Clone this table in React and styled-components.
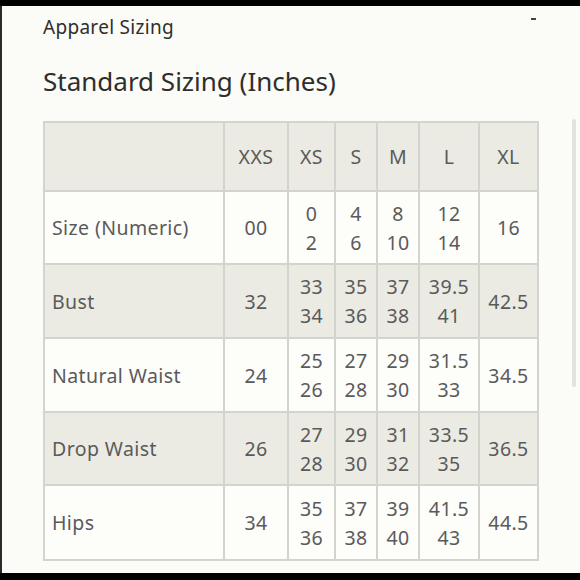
import styled, { createGlobalStyle } from "styled-components";

const GlobalStyle = createGlobalStyle`
  html, body {
    margin: 0;
    background: #000;
  }
  * {
    box-sizing: border-box;
  }
`;

const Screen = styled.div`
  width: 580px;
  height: 580px;
  padding: 6px 0 7px 0;
  background: #000;
`;

const Sheet = styled.div`
  position: relative;
  height: 100%;
  background: #fbfbf7;
  border-left: 2px solid #2a2a2a;
  padding: 9px 0 0 41px;
  font-family: "Noto Sans", "Liberation Sans", sans-serif;
  color: #2e2e2e;
`;

const Caption = styled.div`
  font-size: 19px;
  line-height: 24px;
  letter-spacing: 0.3px;
`;

const Title = styled.h1`
  margin: 25px 0 23px 0;
  font-size: 26px;
  line-height: 34px;
  font-weight: 400;
`;

const Dash = styled.span`
  position: absolute;
  top: 12px;
  right: 44px;
  width: 5px;
  height: 2px;
  background: #444;
`;

const ScrollThumb = styled.div`
  position: absolute;
  top: 113px;
  right: 4px;
  width: 4px;
  height: 268px;
  border-radius: 2px;
  background: #e3e3de;
`;

const Table = styled.table`
  width: 494px;
  table-layout: fixed;
  border-collapse: collapse;
  border: 2px solid #d4d4cf;
  color: #5a5a5a;
  font-size: 19.5px;
  letter-spacing: 0.4px;
`;

const Row = styled.tr`
  height: ${(p) => p.h}px;
  background: ${(p) => (p.shade ? "#ebebe3" : "#fdfdfa")};
`;

const Cell = styled.td`
  border: 2px solid #d4d4cf;
  text-align: center;
  vertical-align: middle;
  padding: 0;
  line-height: 29px;
`;

const Label = styled(Cell)`
  text-align: left;
  padding-left: 7px;
`;

const Stack = styled.div`
  display: flex;
  flex-direction: column;
  align-items: center;
`;

const widths = [180, 64, 47, 42, 42, 60, 59];
const sizes = ["XXS", "XS", "S", "M", "L", "XL"];

const rows = [
  { label: "Size (Numeric)", values: ["00", ["0", "2"], ["4", "6"], ["8", "10"], ["12", "14"], "16"] },
  { label: "Bust", values: ["32", ["33", "34"], ["35", "36"], ["37", "38"], ["39.5", "41"], "42.5"] },
  { label: "Natural Waist", values: ["24", ["25", "26"], ["27", "28"], ["29", "30"], ["31.5", "33"], "34.5"] },
  { label: "Drop Waist", values: ["26", ["27", "28"], ["29", "30"], ["31", "32"], ["33.5", "35"], "36.5"] },
  { label: "Hips", values: ["34", ["35", "36"], ["37", "38"], ["39", "40"], ["41.5", "43"], "44.5"] },
];

const heights = [73, 74, 74, 73, 75];

export default function App() {
  return (
    <Screen>
      <GlobalStyle />
      <Sheet>
        <Dash />
        <ScrollThumb />
        <Caption>Apparel Sizing</Caption>
        <Title>Standard Sizing (Inches)</Title>
        <Table>
          <colgroup>
            {widths.map((w, i) => (
              <col key={i} style={{ width: w }} />
            ))}
          </colgroup>
          <tbody>
            <Row h={69} shade>
              <Cell />
              {sizes.map((s) => (
                <Cell key={s}>{s}</Cell>
              ))}
            </Row>
            {rows.map((r, i) => (
              <Row key={r.label} h={heights[i]} shade={i % 2 === 1}>
                <Label>{r.label}</Label>
                {r.values.map((v, j) => (
                  <Cell key={j}>
                    {Array.isArray(v) ? (
                      <Stack>
                        <span>{v[0]}</span>
                        <span>{v[1]}</span>
                      </Stack>
                    ) : (
                      v
                    )}
                  </Cell>
                ))}
              </Row>
            ))}
          </tbody>
        </Table>
      </Sheet>
    </Screen>
  );
}
